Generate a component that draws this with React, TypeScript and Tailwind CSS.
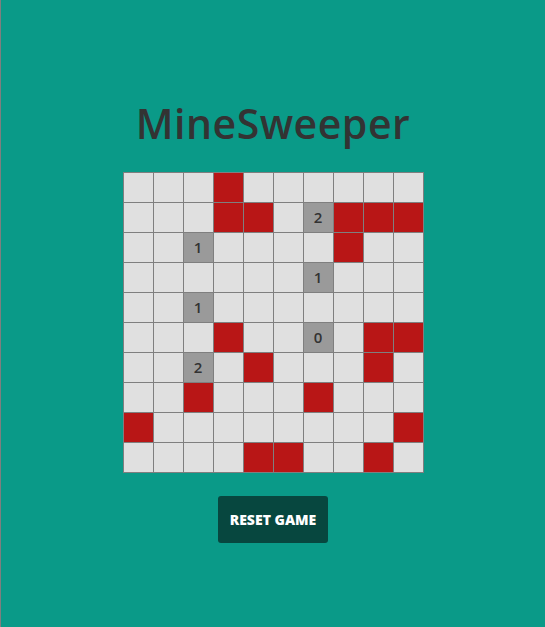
import React from "react";

type Cell = { kind: "empty" | "mine" | "num"; n?: number };

const mines: Record<number, number[]> = {
  0: [3],
  1: [3, 4, 7, 8, 9],
  2: [7],
  5: [3, 8, 9],
  6: [4, 8],
  7: [2, 6],
  8: [0, 9],
  9: [4, 5, 8],
};
const nums: Record<string, number> = {
  "1-6": 2,
  "2-2": 1,
  "3-6": 1,
  "4-2": 1,
  "5-6": 0,
  "6-2": 2,
};

function cellAt(r: number, c: number): Cell {
  const k = `${r}-${c}`;
  if (k in nums) return { kind: "num", n: nums[k] };
  if ((mines[r] || []).includes(c)) return { kind: "mine" };
  return { kind: "empty" };
}

export default function App() {
  const rows = Array.from({ length: 10 }, (_, r) => r);
  const cols = Array.from({ length: 10 }, (_, c) => c);
  return (
    <div
      className="min-h-screen w-full bg-[#0a9a88] border-l border-[#7f7f7f] flex flex-col items-center"
      style={{ fontFamily: '"Open Sans", "Noto Sans", sans-serif' }}
    >
      <h1 className="mt-[97px] text-[41px] leading-[52px] font-semibold text-[#333333] tracking-[0.5px]">
        MineSweeper
      </h1>
      <div className="mt-[23px] grid grid-cols-[repeat(10,29px)] gap-px bg-[#7f7f7f] p-px">
        {rows.map((r) =>
          cols.map((c) => {
            const cell = cellAt(r, c);
            const cls =
              cell.kind === "mine"
                ? "bg-[#b81616]"
                : cell.kind === "num"
                ? "bg-[#9a9a9a]"
                : "bg-[#e0e0e0]";
            return (
              <div
                key={`${r}-${c}`}
                className={`h-[29px] w-[29px] flex items-center justify-center text-[15px] font-semibold text-[#333333] ${cls}`}
              >
                {cell.kind === "num" ? cell.n : null}
              </div>
            );
          })
        )}
      </div>
      <button className="mt-[23px] w-[110px] h-[47px] rounded-[3px] bg-[#07473f] text-white text-[14px] font-extrabold tracking-[0px]">
        RESET GAME
      </button>
    </div>
  );
}
